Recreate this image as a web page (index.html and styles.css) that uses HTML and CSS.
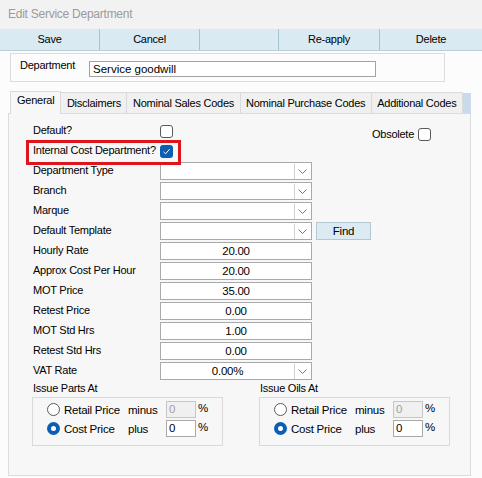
FILE: index.html
```html
<!DOCTYPE html>
<html lang="en">
<head>
  <meta charset="UTF-8">
  <title>Edit Service Department</title>
  <link rel="stylesheet" href="styles.css">
</head>
<body>

  <div class="titlebar">Edit Service Department</div>

  <div class="toolbar">
    <div class="tb-btn save">Save</div>
    <div class="tb-btn cancel">Cancel</div>
    <div class="tb-btn blank"></div>
    <div class="tb-btn reapply">Re-apply</div>
    <div class="tb-btn delete">Delete</div>
  </div>

  <div class="dept-box">
    <span class="dept-label">Department</span>
    <input class="dept-input" type="text" value="Service goodwill">
  </div>

  <div class="tabs">
    <div class="tab active">General</div>
    <div class="tab">Disclaimers</div>
    <div class="tab">Nominal Sales Codes</div>
    <div class="tab">Nominal Purchase Codes</div>
    <div class="tab">Additional Codes</div>
    <div class="tab-fill"></div>
  </div>

  <div class="tab-panel">
    <div class="row">
      <span class="lbl">Default?</span>
      <span class="check"></span>
      <span class="obsolete">Obsolete <span class="check"></span></span>
    </div>
    <div class="row">
      <span class="lbl">Internal Cost Department?</span>
      <span class="check checked">
        <svg width="9" height="9" viewBox="0 0 9 9"><path d="M1.5 4.8 L3.6 6.8 L7.6 2.2" fill="none" stroke="#fff" stroke-width="1"/></svg>
      </span>
    </div>

    <div class="highlight"></div>

    <div class="row">
      <span class="lbl">Department Type</span>
      <div class="field combo"><span class="val"></span><span class="drop"></span></div>
    </div>
    <div class="row">
      <span class="lbl">Branch</span>
      <div class="field combo"><span class="val"></span><span class="drop"></span></div>
    </div>
    <div class="row">
      <span class="lbl">Marque</span>
      <div class="field combo"><span class="val"></span><span class="drop"></span></div>
    </div>
    <div class="row">
      <span class="lbl">Default Template</span>
      <div class="field combo"><span class="val"></span><span class="drop"></span></div>
      <div class="find-btn">Find</div>
    </div>
    <div class="row">
      <span class="lbl">Hourly Rate</span>
      <div class="field num">20.00</div>
    </div>
    <div class="row">
      <span class="lbl">Approx Cost Per Hour</span>
      <div class="field num">20.00</div>
    </div>
    <div class="row">
      <span class="lbl">MOT Price</span>
      <div class="field num">35.00</div>
    </div>
    <div class="row">
      <span class="lbl">Retest Price</span>
      <div class="field num">0.00</div>
    </div>
    <div class="row">
      <span class="lbl">MOT Std Hrs</span>
      <div class="field num">1.00</div>
    </div>
    <div class="row">
      <span class="lbl">Retest Std Hrs</span>
      <div class="field num">0.00</div>
    </div>
    <div class="row">
      <span class="lbl">VAT Rate</span>
      <div class="field combo"><span class="val num">0.00%</span><span class="drop"></span></div>
    </div>

    <div class="issue-groups">
      <div class="issue">
        <div class="issue-title">Issue Parts At</div>
        <div class="issue-box">
          <div class="radio-row">
            <span class="radio"></span><span class="opt">Retail Price</span><span class="op">minus</span>
            <span class="pct disabled">0</span><span class="sign">%</span>
          </div>
          <div class="radio-row">
            <span class="radio on"></span><span class="opt">Cost Price</span><span class="op">plus</span>
            <span class="pct">0</span><span class="sign">%</span>
          </div>
        </div>
      </div>
      <div class="issue">
        <div class="issue-title">Issue Oils At</div>
        <div class="issue-box">
          <div class="radio-row">
            <span class="radio"></span><span class="opt">Retail Price</span><span class="op">minus</span>
            <span class="pct disabled">0</span><span class="sign">%</span>
          </div>
          <div class="radio-row">
            <span class="radio on"></span><span class="opt">Cost Price</span><span class="op">plus</span>
            <span class="pct">0</span><span class="sign">%</span>
          </div>
        </div>
      </div>
    </div>
  </div>

</body>
</html>
```

FILE: styles.css
```css
html {
  background: #fcfcfc;
  font-family: 'Liberation Sans', Arial, sans-serif;
  font-size: 11px;
  letter-spacing: -0.25px;
  color: #000;
}

body {
  margin: 0;
  width: 482px;
  height: 478px;
  overflow: hidden;
}

.titlebar {
  height: 29px;
  line-height: 29px;
  padding-left: 8px;
  background: #f2f2f2;
  color: #9b9b9b;
  font-size: 12px;
}

.toolbar {
  display: grid;
  grid-template-columns: 100px 100px 79px 101px 102px;
  height: 21px;
  background: #d9eaf2;
  border-bottom: 1px solid #b9cdd8;
}

.tb-btn {
  line-height: 21px;
  text-align: center;
  border-right: 1px solid #a9c2cf;
}

.tb-btn:last-child {
  border-right: none;
}

.dept-box {
  display: flex;
  align-items: center;
  width: 433px;
  height: 27px;
  margin: 2px 0 0 10px;
  border: 1px solid #dcdcdc;
}

.dept-label {
  width: 69px;
  padding-left: 9px;
  margin-top: -6px;
}

.dept-input {
  width: 287px;
  height: 16px;
  padding: 0 3px;
  margin: 2px 0 0 0;
  border: 1px solid #a3a3a3;
  font: inherit;
  font-size: 11.5px;
  box-sizing: border-box;
}

.tabs {
  display: flex;
  align-items: flex-end;
  height: 21px;
  margin: 10px 11px 0 8px;
}

.tab {
  height: 20px;
  line-height: 20px;
  padding: 0 5.5px;
  background: #f0f0f0;
  border: 1px solid #dadada;
  border-bottom: none;
  margin-left: -1px;
  white-space: nowrap;
}

.tab.active {
  height: 22px;
  line-height: 17px;
  margin-left: 2px;
  padding: 0 6px;
  background: #f7f7f7;
  position: relative;
  z-index: 1;
  margin-bottom: -1px;
}

.tab-fill {
  flex: 1;
  height: 20px;
  background: #cadaea;
}

.tab-panel {
  position: relative;
  width: 461px;
  height: 353px;
  margin-left: 8px;
  padding-top: 8px;
  background: #f7f7f7;
  border: 1px solid #dcdcdc;
}

.row {
  display: flex;
  align-items: center;
  height: 18px;
  margin-bottom: 2px;
  padding-left: 24px;
}

.lbl {
  width: 127px;
  margin-top: -3px;
  white-space: nowrap;
}

.check {
  display: inline-flex;
  align-items: center;
  justify-content: center;
  width: 11px;
  height: 11px;
  border: 1px solid #5a5a5a;
  border-radius: 3px;
  background: #fff;
  vertical-align: middle;
}

.check.checked {
  width: 13px;
  height: 13px;
  border: none;
  background: #0a5fb4;
}

.obsolete {
  display: flex;
  align-items: center;
  gap: 4px;
  margin-left: auto;
  margin-right: 39px;
  margin-top: 6px;
}

.highlight {
  position: absolute;
  left: 17px;
  top: 26px;
  width: 149px;
  height: 19px;
  border: 3px solid #e0151b;
}

.field {
  width: 150px;
  height: 16px;
  border: 1px solid #a9a9a9;
  background: #fff;
  display: flex;
  align-items: center;
  font-size: 11.5px;
}

.field.num {
  justify-content: center;
}

.combo .val {
  flex: 1;
  text-align: center;
}

.drop {
  width: 15px;
  height: 15px;
  margin-right: 1px;
  border-left: 1px solid #d0d0d0;
  background: no-repeat center / 9px 5px url("data:image/svg+xml,%3Csvg xmlns='http://www.w3.org/2000/svg' width='9' height='5'%3E%3Cpath d='M0.5 0.5 L4.5 4.5 L8.5 0.5' fill='none' stroke='%23777' stroke-width='1'/%3E%3C/svg%3E");
}

.find-btn {
  width: 53px;
  height: 16px;
  line-height: 16px;
  margin-left: 4px;
  background: #dcebf3;
  border: 1px solid #b4c8d4;
  text-align: center;
  font-size: 11.5px;
}

.issue-groups {
  display: flex;
  gap: 36px;
  padding-left: 23px;
  margin-top: 1px;
}

.issue-title {
  height: 15px;
  margin-left: 1px;
}

.issue-box {
  width: 189px;
  height: 44px;
  border: 1px solid #dadada;
  padding-top: 3px;
  box-sizing: content-box;
}

.radio-row {
  display: flex;
  align-items: center;
  height: 17px;
  margin-bottom: 2px;
  padding-left: 14px;
}

.radio {
  width: 11px;
  height: 11px;
  border: 1px solid #5a5a5a;
  border-radius: 50%;
  background: #fff;
  box-sizing: content-box;
}

.radio.on {
  width: 5px;
  height: 5px;
  border: 4px solid #0a5fb4;
}

.opt {
  width: 64px;
  padding-left: 4px;
  font-size: 11.5px;
}

.op {
  width: 38px;
  font-size: 11.5px;
}

.pct {
  width: 26px;
  height: 15px;
  line-height: 15px;
  padding-left: 2px;
  border: 1px solid #a9a9a9;
  background: #fff;
  font-size: 11.5px;
}

.pct.disabled {
  background: #f0f0f0;
  border-color: #c6c6c6;
  color: #a0a0a0;
}

.sign {
  padding-left: 2px;
  margin-top: -3px;
  font-size: 11.5px;
}
```
